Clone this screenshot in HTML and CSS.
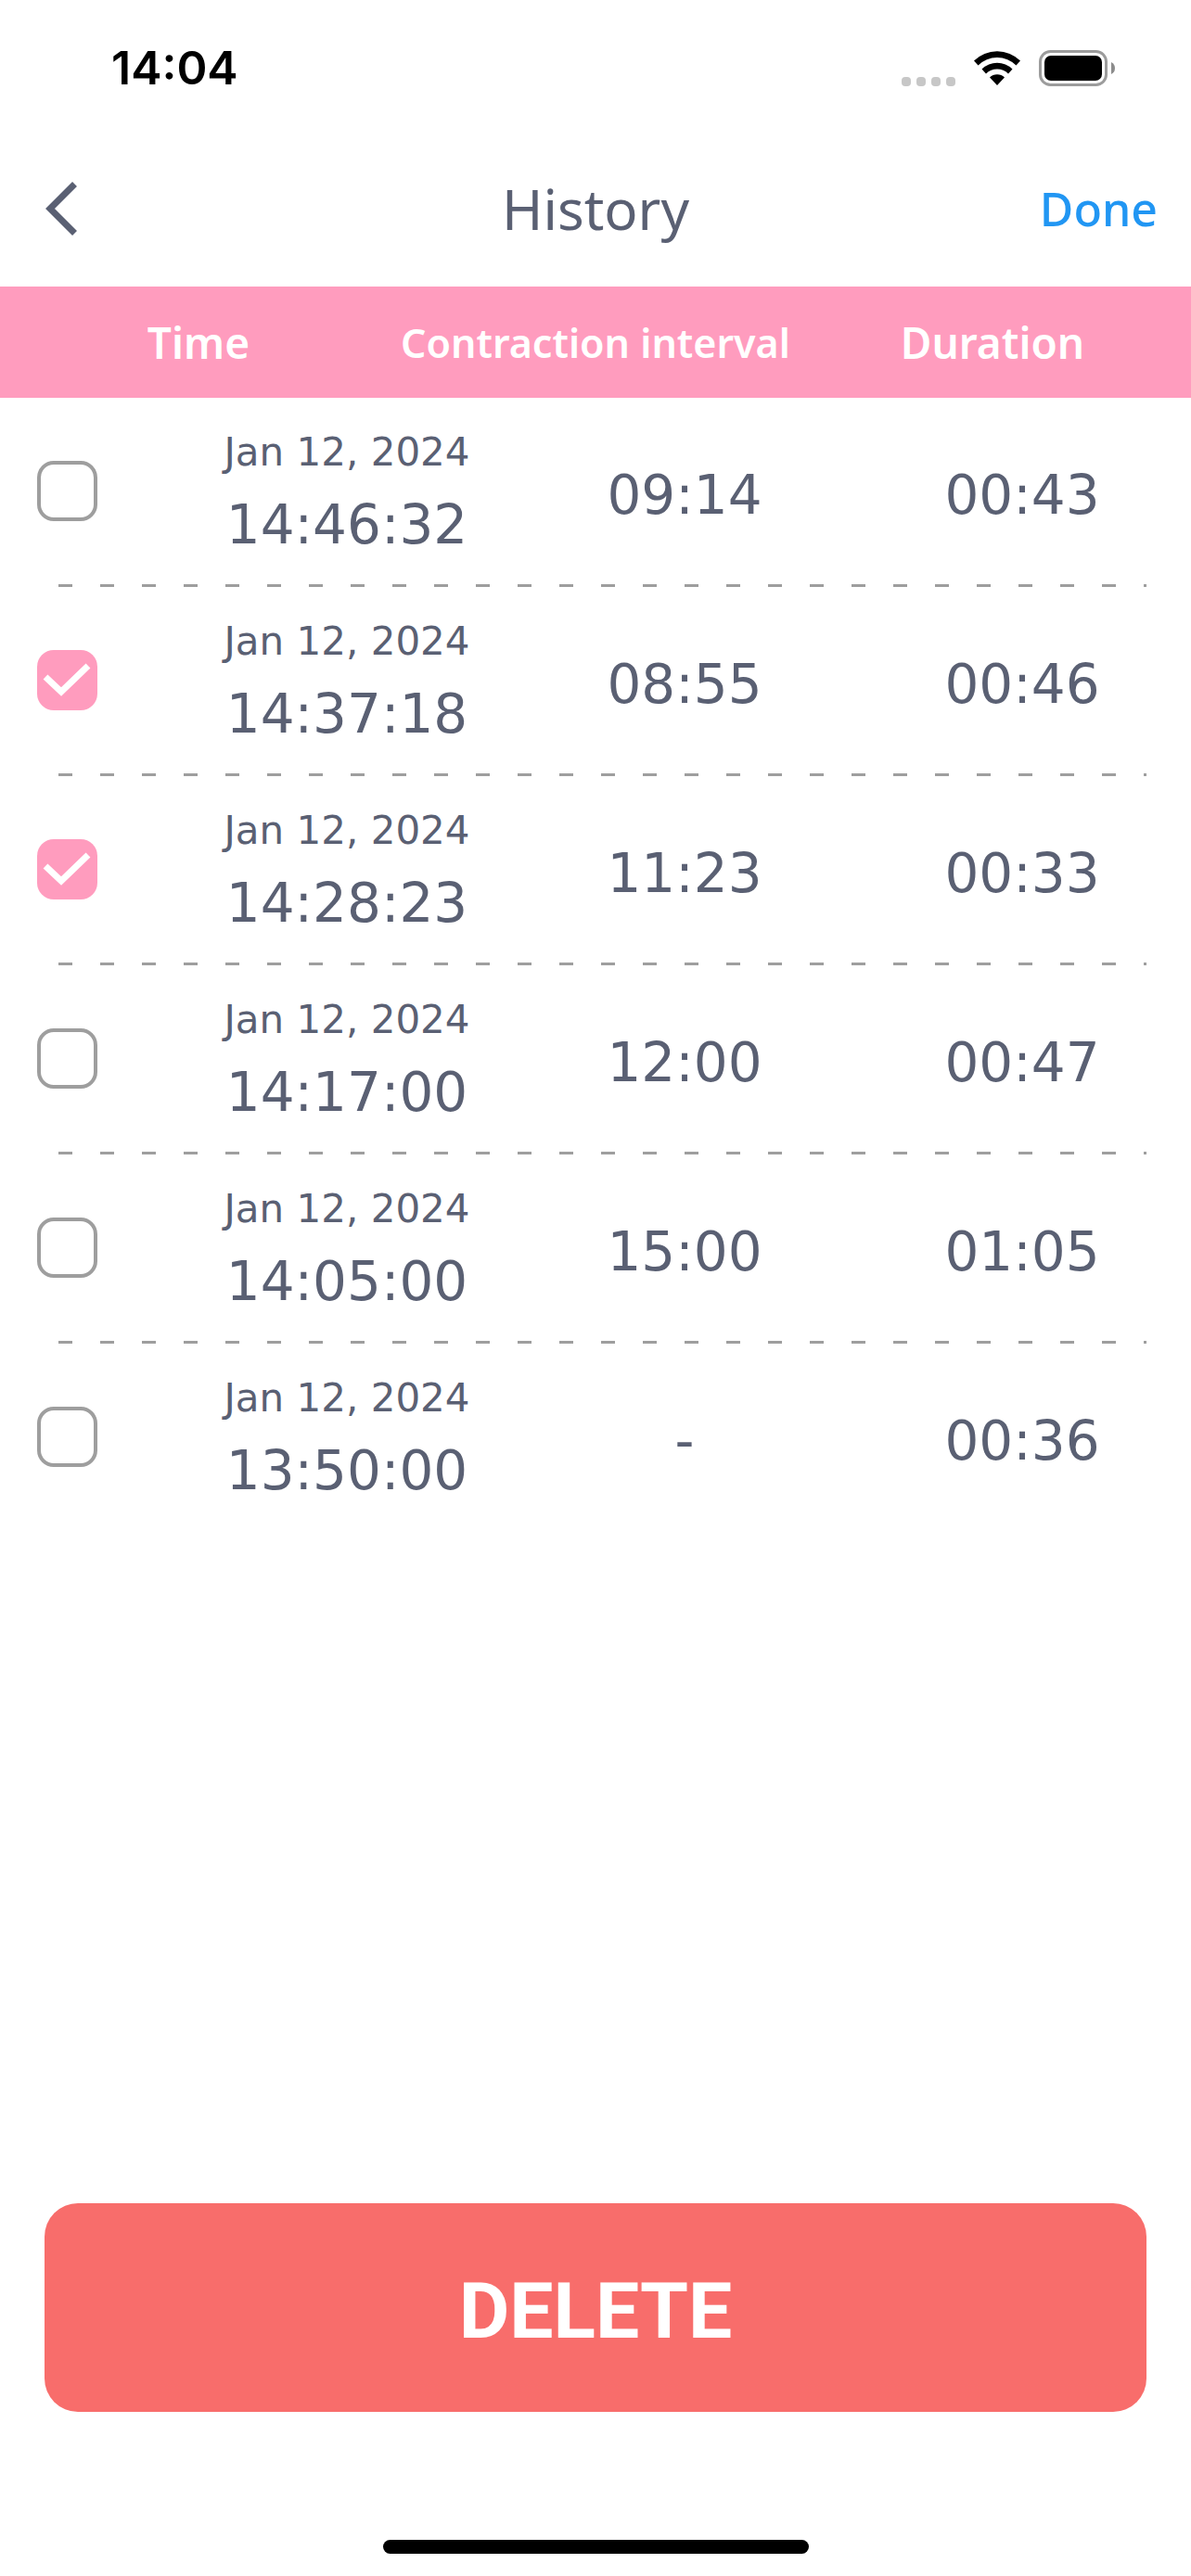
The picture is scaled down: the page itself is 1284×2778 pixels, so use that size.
FILE: index.html
```html
<!DOCTYPE html>
<html lang="en">
<head>
    <meta charset="UTF-8">
    <meta name="viewport" content="width=device-width, initial-scale=1.0">
    <title>History</title>
    <link rel="stylesheet" href="styles.css">
</head>
<body>
    <div class="status">
        <div class="clock">14:04</div>
        <div class="status-icons">
            <svg class="dots" width="58" height="10" viewBox="0 0 58 10" fill="#c7c7c7">
                <rect x="0" width="10" height="10" rx="4"/>
                <rect x="16" width="10" height="10" rx="4"/>
                <rect x="32" width="10" height="10" rx="4"/>
                <rect x="48" width="10" height="10" rx="4"/>
            </svg>
            <svg width="50" height="37" viewBox="0 0 50 37">
                <path d="M0 10.500A35.500 35.500 0 0 1 50 10.500L45.500 15.500A29 29 0 0 0 4.500 15.500Z"/>
                <path d="M8.500 19.500A23.500 23.500 0 0 1 41.500 19.500L37 24.500A17 17 0 0 0 13 24.500Z"/>
                <path d="M17 28.500A11.500 11.500 0 0 1 33 28.500L25 37Z"/>
            </svg>
            <svg width="82" height="39" viewBox="0 0 82 39">
                <rect x="1.500" y="1.500" width="71" height="36" rx="11" fill="none" stroke="#9c9c9c" stroke-width="3"/>
                <rect x="6" y="6" width="62" height="27" rx="7"/>
                <path d="M78 13Q82 15 82 19.500Q82 24 78 26Z" fill="#8c8c8c"/>
            </svg>
        </div>
    </div>

    <header class="nav">
        <button class="btn-back" aria-label="Back">
            <svg width="36" height="60" viewBox="0 0 36 60" fill="none" stroke="#5a6073" stroke-width="7">
                <path d="M32.500 3.500L6 30L32.500 56.500"/>
            </svg>
        </button>
        <h1 class="title">History</h1>
        <button class="btn-done">Done</button>
    </header>

    <table class="history">
        <thead>
            <tr>
                <th colspan="2">Time</th>
                <th class="small">Contraction interval</th>
                <th>Duration</th>
            </tr>
        </thead>
        <tbody>
            <tr>
                <td><input type="checkbox" id="c1" aria-labelledby="t1"></td>
                <td><label for="c1" id="t1"><span class="date">Jan 12, 2024</span><span class="time">14:46:32</span></label></td>
                <td class="value">09:14</td>
                <td class="value">00:43</td>
            </tr>
            <tr>
                <td><input type="checkbox" id="c2" aria-labelledby="t2" checked></td>
                <td><label for="c2" id="t2"><span class="date">Jan 12, 2024</span><span class="time">14:37:18</span></label></td>
                <td class="value">08:55</td>
                <td class="value">00:46</td>
            </tr>
            <tr>
                <td><input type="checkbox" id="c3" aria-labelledby="t3" checked></td>
                <td><label for="c3" id="t3"><span class="date">Jan 12, 2024</span><span class="time">14:28:23</span></label></td>
                <td class="value">11:23</td>
                <td class="value">00:33</td>
            </tr>
            <tr>
                <td><input type="checkbox" id="c4" aria-labelledby="t4"></td>
                <td><label for="c4" id="t4"><span class="date">Jan 12, 2024</span><span class="time">14:17:00</span></label></td>
                <td class="value">12:00</td>
                <td class="value">00:47</td>
            </tr>
            <tr>
                <td><input type="checkbox" id="c5" aria-labelledby="t5"></td>
                <td><label for="c5" id="t5"><span class="date">Jan 12, 2024</span><span class="time">14:05:00</span></label></td>
                <td class="value">15:00</td>
                <td class="value">01:05</td>
            </tr>
            <tr>
                <td><input type="checkbox" id="c6" aria-labelledby="t6"></td>
                <td><label for="c6" id="t6"><span class="date">Jan 12, 2024</span><span class="time">13:50:00</span></label></td>
                <td class="value">-</td>
                <td class="value">00:36</td>
            </tr>
        </tbody>
    </table>

    <footer class="bottom">
        <button class="btn-delete">DELETE</button>
        <div class="home-bar"></div>
    </footer>
</body>
</html>
```

FILE: styles.css
```css
* { box-sizing: border-box; }
body {
    margin: 0;
    min-height: 100vh;
    display: flex; flex-direction: column;
    background-color: white;
    color: #5a6073;
    font-family: "Noto Sans", sans-serif;
}
button { padding: 0; border: none; background: none; font-family: inherit; cursor: pointer; }
svg { display: block; }

/* status bar */
.status {
    display: flex; justify-content: space-between; align-items: center;
    padding: 43px 82px 38px 120px;
}
.clock { color: black; font-family: Inter, sans-serif; font-size: 50px; font-weight: 600; line-height: 60px; }
.status-icons { display: flex; align-items: center; gap: 20px; }
.dots { align-self: flex-end; }

/* title bar */
.nav {
    display: grid; grid-template-columns: 1fr auto 1fr; align-items: center;
    height: 168px;
    padding: 0 36px;
}
.btn-back { justify-self: start; padding-left: 12px; }
.title { margin: 0; font-size: 60px; font-weight: 400; line-height: 80px; }
.btn-done { justify-self: end; color: #2196f3; font-size: 50px; font-weight: 500; line-height: 80px; }

/* list */
.history, .history thead, .history tbody { display: block; width: 100%; }
.history tr { display: grid; align-items: center; text-align: center; }
.history thead tr {
    grid-template-columns: repeat(3, 1fr);
    height: 120px;
    background-color: #ff9cbe;
    color: white;
}
.history th { padding: 0; font-size: 46px; font-weight: 600; }
.history th.small { font-size: 43px; }
.history tbody tr {
    grid-template-columns: 192px 1fr 1fr 1fr;
    height: 204px;
    padding-bottom: 3px;
    font-family: "DejaVu Sans", sans-serif;
    font-size: 58px;
}
.history tbody tr:not(:last-child) {
    background: repeating-linear-gradient(to right, #9e9e9e 0 15px, transparent 15px 45px) 63px 100% / calc(100% - 111px) 3px no-repeat;
}
.history td { padding: 0; }
.history td:first-child { display: flex; padding-left: 40px; }
.history td.value { padding-top: 8px; }
.date, .time { display: block; }
.date { font-size: 42px; line-height: 72px; }
.time { line-height: 84px; }

input[type="checkbox"] {
    appearance: none;
    width: 65px; height: 65px;
    margin: 0;
    border: 4px solid #9e9e9e; border-radius: 18px;
}
input[type="checkbox"]:checked {
    border: none;
    background: #ff9cbe url('data:image/svg+xml,<svg xmlns="http://www.w3.org/2000/svg" viewBox="0 0 65 65"><path d="M9 29L26 45L55 17" fill="none" stroke="white" stroke-width="7"/></svg>');
}

/* delete button */
.bottom { margin-top: auto; padding: 0 48px 24px; }
.btn-delete {
    display: block;
    width: 100%; height: 225px;
    padding-top: 8px;
    border-radius: 36px;
    background-color: #f86d6b;
    color: white;
    font-family: Roboto, sans-serif; font-size: 84px; font-weight: 700;
}
.home-bar {
    width: 459px; height: 15px;
    margin: 138px auto 0;
    border-radius: 8px;
    background-color: black;
}
```
